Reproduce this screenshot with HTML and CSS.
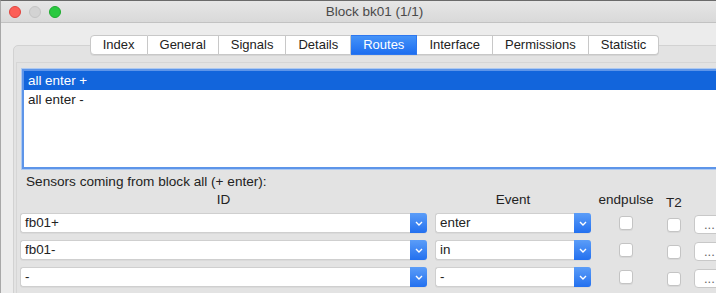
FILE: index.html
```html
<!DOCTYPE html>
<html lang="en">
<head>
  <meta charset="UTF-8" />
  <title>Block bk01 (1/1)</title>
  <link rel="stylesheet" href="styles.css">
</head>
<body>
  <div class="window">
    <div class="titlebar">
      <div class="lights">
        <span class="light red"></span>
        <span class="light gray"></span>
        <span class="light green"></span>
      </div>
      <div class="title">Block bk01 (1/1)</div>
      <div></div>
    </div>

    <div class="content">
      <div class="tabs">
        <div class="tab">Index</div>
        <div class="tab">General</div>
        <div class="tab">Signals</div>
        <div class="tab">Details</div>
        <div class="tab active">Routes</div>
        <div class="tab">Interface</div>
        <div class="tab">Permissions</div>
        <div class="tab">Statistic</div>
      </div>

      <div class="pane">
        <div class="group">
          <div class="list">
            <div class="list-item selected">all enter +</div>
            <div class="list-item">all enter -</div>
          </div>

          <div class="caption">Sensors coming from block all (+ enter):</div>

          <div class="sensor-grid header">
            <div class="col-head">ID</div>
            <div class="col-gap"></div>
            <div class="col-head">Event</div>
            <div class="col-head">endpulse</div>
            <div class="col-head t2">T2</div>
            <div></div>
            <div></div>
          </div>

          <div class="sensor-rows">
            <div class="sensor-grid">
              <div class="combo"><span class="combo-text">fb01+</span><span class="combo-btn"><svg width="8" height="5" viewBox="0 0 8 5"><path d="M1 1 L4 4 L7 1" fill="none" stroke="#fff" stroke-width="1.4"/></svg></span></div>
              <div class="col-gap"></div>
              <div class="combo"><span class="combo-text">enter</span><span class="combo-btn"><svg width="8" height="5" viewBox="0 0 8 5"><path d="M1 1 L4 4 L7 1" fill="none" stroke="#fff" stroke-width="1.4"/></svg></span></div>
              <div class="cell"><span class="check"></span></div>
              <div class="cell"><span class="check low"></span></div>
              <div></div>
              <div class="more">...</div>
            </div>
            <div class="sensor-grid">
              <div class="combo"><span class="combo-text">fb01-</span><span class="combo-btn"><svg width="8" height="5" viewBox="0 0 8 5"><path d="M1 1 L4 4 L7 1" fill="none" stroke="#fff" stroke-width="1.4"/></svg></span></div>
              <div class="col-gap"></div>
              <div class="combo"><span class="combo-text">in</span><span class="combo-btn"><svg width="8" height="5" viewBox="0 0 8 5"><path d="M1 1 L4 4 L7 1" fill="none" stroke="#fff" stroke-width="1.4"/></svg></span></div>
              <div class="cell"><span class="check"></span></div>
              <div class="cell"><span class="check low"></span></div>
              <div></div>
              <div class="more">...</div>
            </div>
            <div class="sensor-grid">
              <div class="combo"><span class="combo-text">-</span><span class="combo-btn"><svg width="8" height="5" viewBox="0 0 8 5"><path d="M1 1 L4 4 L7 1" fill="none" stroke="#fff" stroke-width="1.4"/></svg></span></div>
              <div class="col-gap"></div>
              <div class="combo"><span class="combo-text">-</span><span class="combo-btn"><svg width="8" height="5" viewBox="0 0 8 5"><path d="M1 1 L4 4 L7 1" fill="none" stroke="#fff" stroke-width="1.4"/></svg></span></div>
              <div class="cell"><span class="check"></span></div>
              <div class="cell"><span class="check low"></span></div>
              <div></div>
              <div class="more">...</div>
            </div>
          </div>
        </div>
      </div>
    </div>
  </div>
</body>
</html>
```

FILE: styles.css
```css
* {
  margin: 0;
  padding: 0;
  box-sizing: border-box;
}

html, body {
  width: 716px;
  height: 293px;
  overflow: hidden;
  background: #ececec;
  font-family: 'Liberation Sans', Arial, sans-serif;
  font-size: 13px;
  color: #222;
}

.window {
  width: 748px;
  height: 293px;
  background: #ececec;
  border-left: 1px solid #a8a8a8;
  border-top: 1px solid #6a6a6a;
}

.titlebar {
  height: 22px;
  display: grid;
  grid-template-columns: 1fr auto 1fr;
  align-items: center;
  background: linear-gradient(to bottom, #e6e6e6, #d9d9d9);
  border-bottom: 1px solid #c2c2c2;
}

.lights {
  display: flex;
  gap: 8px;
  padding-left: 8px;
}

.light {
  width: 12px;
  height: 12px;
  border-radius: 50%;
}

.light.red { background: #fc5f57; border: 1px solid #e0443e; }
.light.gray { background: #d3d3d3; border: 1px solid #c4c4c4; }
.light.green { background: #2ac940; border: 1px solid #1eab2f; }

.title {
  color: #4a4a4a;
  font-size: 13.5px;
}

.content {
  padding-top: 12px;
}

.tabs {
  display: flex;
  justify-content: center;
  position: relative;
  z-index: 1;
  margin-bottom: -10px;
}

.tab {
  height: 20px;
  line-height: 18px;
  padding: 0 12px;
  background: #fff;
  border: 1px solid #c8c8c8;
  border-left: none;
  box-shadow: 0 1px 0 rgba(0, 0, 0, 0.06);
}

.tab:first-child {
  border-left: 1px solid #c8c8c8;
  border-radius: 4px 0 0 4px;
}

.tab:last-child {
  border-radius: 0 4px 4px 0;
}

.tab.active {
  background: linear-gradient(to bottom, #4593f8, #1d6ef0);
  border-color: #2d77ef;
  color: #fff;
}

.pane {
  margin: 0 12px;
  height: 260px;
  background: #e3e3e3;
  border: 1px solid #d2d2d2;
  border-radius: 5px;
  padding: 16px 2px 0;
}

.group {
  height: 240px;
  border: 1px solid #d6d6d6;
  border-bottom: none;
  border-right: none;
  padding: 5px 0 0 5px;
}

.list {
  height: 100px;
  margin-top: 1px;
  margin-right: 4px;
  background: #fff;
  border: 2px solid #5d95e9;
  box-shadow: 0 0 0 1px #adc9f1;
  font-size: 13.4px;
}

.list-item {
  height: 19px;
  line-height: 19px;
  padding-left: 4px;
}

.list-item.selected {
  background: #1265dc;
  color: #fff;
}

.caption {
  margin-top: 5px;
  margin-left: 4px;
  line-height: 16px;
  font-size: 13.6px;
}

.sensor-grid {
  display: grid;
  grid-template-columns: 407px 8px 156px 70px 26px 7px 40px;
  grid-auto-rows: 20px;
  margin-left: -2px;
  align-items: center;
}

.sensor-grid.header {
  margin-top: 2px;
  grid-auto-rows: 18px;
  align-items: start;
}

.col-head {
  text-align: center;
  line-height: 16px;
  font-size: 13.5px;
}

.col-head.t2 {
  padding-top: 3px;
}

.sensor-rows {
  display: flex;
  flex-direction: column;
  gap: 7px;
  margin-top: 3px;
}

.combo {
  height: 20px;
  display: flex;
  background: #fff;
  border: 1px solid #cfcfcf;
  border-right: none;
  border-radius: 3px;
  box-shadow: 0 1px 0 rgba(0, 0, 0, 0.04);
}

.combo-text {
  flex: 1;
  line-height: 18px;
  padding-left: 4px;
  font-size: 13.4px;
}

.combo-btn {
  width: 17px;
  margin: -1px 0;
  display: flex;
  align-items: center;
  justify-content: center;
  background: linear-gradient(to bottom, #5b9df8, #2370ef);
  border-radius: 0 3px 3px 0;
}

.cell {
  display: flex;
  justify-content: center;
}

.check {
  width: 14px;
  height: 14px;
  background: #fff;
  border: 1px solid #c4c4c4;
  border-radius: 3px;
  box-shadow: 0 1px 0 rgba(0, 0, 0, 0.05);
}

.check.low {
  margin-top: 3px;
}

.more {
  align-self: start;
  height: 19px;
  margin-top: 2px;
  line-height: 17px;
  padding-left: 9px;
  color: #666;
  background: #fff;
  border: 1px solid #c8c8c8;
  border-radius: 4px;
}
```
